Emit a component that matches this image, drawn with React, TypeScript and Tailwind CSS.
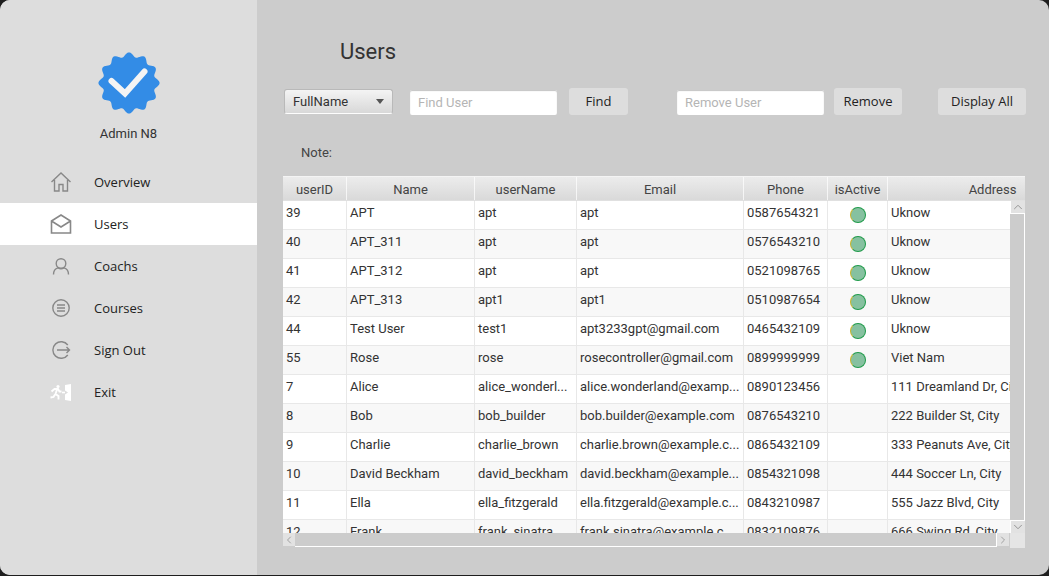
import * as React from "react";
import { ChevronDown, ChevronLeft, ChevronRight, ChevronUp } from "lucide-react";

type User = { id: string; name: string; user: string; email: string; phone: string; active: boolean; address: string };

const users: User[] = [
  { id: "39", name: "APT", user: "apt", email: "apt", phone: "0587654321", active: true, address: "Uknow" },
  { id: "40", name: "APT_311", user: "apt", email: "apt", phone: "0576543210", active: true, address: "Uknow" },
  { id: "41", name: "APT_312", user: "apt", email: "apt", phone: "0521098765", active: true, address: "Uknow" },
  { id: "42", name: "APT_313", user: "apt1", email: "apt1", phone: "0510987654", active: true, address: "Uknow" },
  { id: "44", name: "Test User", user: "test1", email: "apt3233gpt@gmail.com", phone: "0465432109", active: true, address: "Uknow" },
  { id: "55", name: "Rose", user: "rose", email: "rosecontroller@gmail.com", phone: "0899999999", active: true, address: "Viet Nam" },
  { id: "7", name: "Alice", user: "alice_wonderl...", email: "alice.wonderland@examp...", phone: "0890123456", active: false, address: "111 Dreamland Dr, City" },
  { id: "8", name: "Bob", user: "bob_builder", email: "bob.builder@example.com", phone: "0876543210", active: false, address: "222 Builder St, City" },
  { id: "9", name: "Charlie", user: "charlie_brown", email: "charlie.brown@example.c...", phone: "0865432109", active: false, address: "333 Peanuts Ave, City" },
  { id: "10", name: "David Beckham", user: "david_beckham", email: "david.beckham@example...", phone: "0854321098", active: false, address: "444 Soccer Ln, City" },
  { id: "11", name: "Ella", user: "ella_fitzgerald", email: "ella.fitzgerald@example.c...", phone: "0843210987", active: false, address: "555 Jazz Blvd, City" },
  { id: "12", name: "Frank", user: "frank_sinatra", email: "frank.sinatra@example.c...", phone: "0832109876", active: false, address: "666 Swing Rd, City" },
];

// scalloped badge outline
function badgePath() {
  const pts: string[] = [];
  for (let i = 0; i < 180; i++) {
    const a = (i / 180) * Math.PI * 2;
    const r = 28.4 + 2.2 * Math.cos(a * 12);
    pts.push(`${(31 + r * Math.sin(a)).toFixed(2)},${(31 - r * Math.cos(a)).toFixed(2)}`);
  }
  return `M${pts.join("L")}Z`;
}

function Badge() {
  return (
    <svg width="62" height="62" viewBox="0 0 62 62">
      <path d={badgePath()} fill="#338ce6" />
      <path d="M13.5 29 L27 41.5 L46.5 19.5" fill="none" stroke="#f4f4f4" strokeWidth="6" strokeLinecap="round" strokeLinejoin="miter" />
    </svg>
  );
}

const icon = { width: 22, height: 22, viewBox: "0 0 22 22", fill: "none", stroke: "#888888", strokeWidth: 1.4 };

function HomeIcon() {
  return (
    <svg {...icon}>
      <path d="M1.5 11 L11 2 L20.5 11 M4.5 9 V20 H9 V13.5 H13 V20 H17.5 V9" />
    </svg>
  );
}
function MailIcon() {
  return (
    <svg {...icon}>
      <path d="M1.5 8 L11 2 L20.5 8 V20 H1.5 Z M1.5 8 L11 14 L20.5 8" strokeWidth="1.6" />
    </svg>
  );
}
function CoachIcon() {
  return (
    <svg {...icon}>
      <circle cx="11" cy="8.5" r="4.8" />
      <path d="M3.5 19.5 C3.5 16 5.5 13.5 8 12.8 C10 14.2 12 14.2 14 12.8 C16.5 13.5 18.5 16 18.5 19.5" />
    </svg>
  );
}
function ListIcon() {
  return (
    <svg {...icon}>
      <circle cx="11" cy="11" r="8.2" />
      <path d="M7 8 H15 M7 11 H15 M7 14 H15" />
    </svg>
  );
}
function SignOutIcon() {
  return (
    <svg {...icon}>
      <path d="M17.8 6 A8.3 8.3 0 1 0 17.8 16 M7 11 H19.5 M16.5 8 L19.5 11 L16.5 14" />
    </svg>
  );
}
function ExitIcon() {
  return (
    <svg width="22" height="17" viewBox="0 0 22 17">
      <path d="M15 1 L21 0 V17 L15 16 Z" fill="#ffffff" />
      <path d="M15 6.5 L18 8.5 L15 10.5 Z" fill="#dddddd" />
      <path d="M12 7.7 H15 V9.3 H12 Z" fill="#ffffff" />
      <circle cx="8" cy="2.5" r="1.6" fill="#ffffff" />
      <path d="M1.5 7.5 L4.5 5 H8 L9.5 7.5 H11.5 M7 5.5 L5.5 10 L8.5 12 V15.5 M5 10.5 L3.5 13 L0.5 13.5" fill="none" stroke="#ffffff" strokeWidth="1.9" />
    </svg>
  );
}

const nav = [
  { label: "Overview", Icon: HomeIcon },
  { label: "Users", Icon: MailIcon, active: true },
  { label: "Coachs", Icon: CoachIcon },
  { label: "Courses", Icon: ListIcon },
  { label: "Sign Out", Icon: SignOutIcon },
  { label: "Exit", Icon: ExitIcon },
];

function Sidebar() {
  return (
    <aside className="w-[257px] shrink-0 bg-[#dddddd] flex flex-col">
      <div className="pt-[52px] flex flex-col items-center">
        <Badge />
        <div className="mt-[11px] text-[13px] leading-[18px] text-[#333333] font-['Roboto',sans-serif]">Admin N8</div>
      </div>
      <nav className="mt-[18px] flex flex-col">
        {nav.map(({ label, Icon, active }) => (
          <div key={label} className={`h-[42px] flex items-center pl-[50px] ${active ? "bg-white" : ""}`}>
            <span className="w-[44px] flex items-center">
              <Icon />
            </span>
            <span className="mt-[2px] text-[13px] text-[#222222] font-['Open_Sans',sans-serif]">{label}</span>
          </div>
        ))}
      </nav>
    </aside>
  );
}

function Button({ children, className }: { children: React.ReactNode; className: string }) {
  return (
    <button className={`h-[27px] rounded-[3px] bg-[#dddddd] text-[13px] text-[#222222] font-['Open_Sans',sans-serif] ${className}`}>
      {children}
    </button>
  );
}

function TextBox({ placeholder }: { placeholder: string }) {
  return (
    <input
      placeholder={placeholder}
      readOnly
      className="w-[147px] h-[25px] rounded-[2px] bg-white px-[8px] text-[13px] font-['Roboto',sans-serif] placeholder:text-[#b5b5b5] shadow-[inset_0_1px_1px_#c4c4c4] outline-none"
    />
  );
}

const cols = ["w-[64px]", "w-[128px]", "w-[102px]", "w-[167px]", "w-[84px]", "w-[60px]", "w-[210px]"];
const heads = ["userID", "Name", "userName", "Email", "Phone", "isActive", "Address"];

function ActiveDot() {
  return (
    <div className="mt-[3px] mx-auto w-[16px] h-[16px] rounded-full border-[1.5px] border-[#1f9a4a] border-l-[#c9b52c] bg-[#86c1a0]" />
  );
}

function Row({ u, odd }: { u: User; odd: boolean }) {
  const cells = [u.id, u.name, u.user, u.email, u.phone, null, u.address];
  return (
    <div className={`h-[29px] shrink-0 flex border-b border-[#e8e8e8] ${odd ? "bg-[#f8f8f8]" : "bg-white"}`}>
      {cells.map((c, i) => (
        <div key={i} className={`${cols[i]} shrink-0 h-full px-[3px] pt-[3px] leading-[18px] whitespace-nowrap overflow-hidden ${i < 6 ? "border-r border-[#e8e8e8]" : ""}`}>
          {i === 5 ? u.active ? <ActiveDot /> : null : c}
        </div>
      ))}
    </div>
  );
}

function UserTable() {
  return (
    <div className="w-[742px] h-[372px] -ml-[1px] mt-[14px] flex flex-col bg-[#e5e5e5] overflow-hidden text-[13px] text-[#333333] font-['Roboto',sans-serif]">
      <div className="h-[25px] shrink-0 flex overflow-hidden bg-[#e0e0e0]">
        {heads.map((h, i) => (
          <div key={h} className={`${cols[i]} shrink-0 h-[24px] pt-[2px] flex items-center justify-center border-r border-t border-white/70 bg-gradient-to-b from-[#ececec] to-[#d9d9d9] text-[#444444]`}>
            {h}
          </div>
        ))}
      </div>
      <div className="h-[332px] flex">
        <div className="w-[727px] h-full overflow-hidden flex flex-col">
          {users.map((u, i) => (
            <Row key={u.id} u={u} odd={i % 2 === 1} />
          ))}
        </div>
        <div className="w-[15px] h-full flex flex-col bg-white">
          <div className="h-[12px] bg-[#e2e2e2] ml-[1px] flex items-center justify-center">
            <ChevronUp size={14} color="#8a8a8a" strokeWidth={1.5} />
          </div>
          <div className="flex-1 mt-[1px] mb-[1px] bg-[#cccccc] border-r border-white" />
          <div className="h-[12px] bg-[#e2e2e2] ml-[1px] flex items-center justify-center">
            <ChevronDown size={14} color="#8a8a8a" strokeWidth={1.5} />
          </div>
        </div>
      </div>
      <div className="h-[15px] flex bg-[#cccccc]">
        <div className="w-[12px] h-[13px] bg-[#e2e2e2] flex items-center justify-center">
          <ChevronLeft size={14} color="#8a8a8a" strokeWidth={1.5} />
        </div>
        <div className="w-[702px] h-[14px] border-b border-r border-white bg-[#cccccc]" />
        <div className="w-[12px] h-[13px] bg-[#e2e2e2] flex items-center justify-center">
          <ChevronRight size={14} color="#8a8a8a" strokeWidth={1.5} />
        </div>
        <div className="flex-1 ml-[1px] bg-[#e5e5e5]" />
      </div>
    </div>
  );
}

export default function App() {
  return (
    <div className="w-[1049px] h-[576px] bg-[#1e1e1e] overflow-hidden">
      <div className="w-full h-[575px] rounded-[10px] overflow-hidden flex bg-[#cccccc]">
        <Sidebar />
        <main className="flex-1 pl-[27px]">
          <h1 className="ml-[56px] mt-[37px] text-[22px] leading-[30px] text-[#333333] font-['Roboto',sans-serif]">Users</h1>
          <div className="mt-[21px] flex items-center">
            <div className="w-[109px] h-[25px] rounded-[3px] border border-[#b9b9b9] border-b-white/80 bg-gradient-to-b from-[#f4f4f4] to-[#d8d8d8] px-[8px] flex items-center justify-between text-[13px] text-[#333333] font-['Roboto',sans-serif]">
              FullName
              <span className="w-0 h-0 border-x-[4px] border-x-transparent border-t-[5px] border-t-[#555555]" />
            </div>
            <div className="ml-[17px]"><TextBox placeholder="Find User" /></div>
            <Button className="ml-[12px] w-[59px]">Find</Button>
            <div className="ml-[49px]"><TextBox placeholder="Remove User" /></div>
            <Button className="ml-[10px] w-[68px]">Remove</Button>
            <Button className="ml-[36px] w-[88px]">Display All</Button>
          </div>
          <div className="ml-[17px] mt-[29px] text-[13px] leading-[18px] text-[#444444] font-['Roboto',sans-serif]">Note:</div>
          <UserTable />
        </main>
      </div>
    </div>
  );
}
